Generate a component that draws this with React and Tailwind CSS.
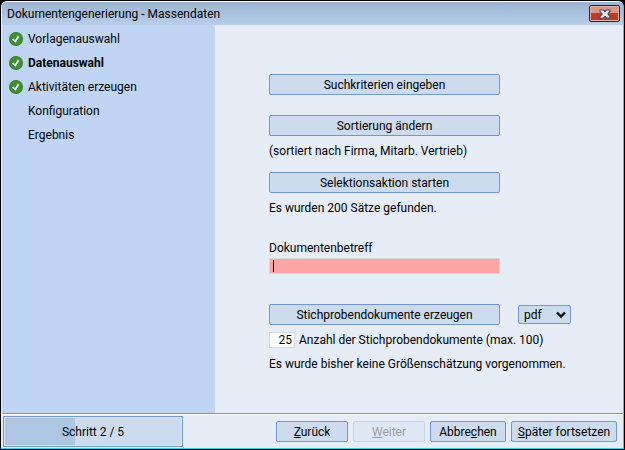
import React, { useState } from 'react';
import clsx from 'clsx';

const steps = [
  { name: 'Vorlagenauswahl', done: true },
  { name: 'Datenauswahl', done: true, current: true },
  { name: 'Aktivitäten erzeugen', done: true },
  { name: 'Konfiguration' },
  { name: 'Ergebnis' },
];

const CheckIcon = () => (
  <svg width="14" height="14" viewBox="0 0 14 14" aria-hidden="true">
    <circle cx="7" cy="7" r="7" fill="#34802a" />
    <circle cx="7" cy="7" r="6" fill="#3f9130" />
    <path d="M3.6 7.2 L6.4 9.4 L9.6 4" fill="none" stroke="#fff" strokeWidth="1.7" />
  </svg>
);

const CloseIcon = () => (
  <svg width="12" height="10" viewBox="0 0 12 10" aria-hidden="true">
    <path d="M1 1 H4.5 L6 2.7 L7.5 1 H11 V2.5 L8.8 5 L11 7.5 V9 H7.5 L6 7.3 L4.5 9 H1 V7.5 L3.2 5 L1 2.5 Z" fill="#f1f2f5" stroke="#4f5565" strokeWidth="1.2" />
  </svg>
);

const ActionButton = ({ className, children, ...props }) => (
  <button
    type="button"
    className={clsx(
      'h-[21px] border border-[#7198d2] rounded-[2px] bg-[#ccdbee] text-center whitespace-nowrap leading-4 disabled:border-[#c3d4ec] disabled:bg-[#dfe8f5] disabled:text-[#9a9ea6]',
      className
    )}
    {...props}
  >
    {children}
  </button>
);

export default function App() {
  const [subject, setSubject] = useState('');
  const [samples, setSamples] = useState('25');
  const [format, setFormat] = useState('pdf');

  return (
    <div className="min-h-screen bg-black p-px font-[Roboto,sans-serif] text-[12px] leading-4 text-black flex">
      <div className="flex-1 flex flex-col rounded-t-md overflow-hidden border border-t-white border-l-[#e6edf7] border-r-[#2fd0ee] border-b-[#2fd0ee] bg-[#e6edf7]">
        {/* Title bar */}
        <header className="flex items-start justify-between h-[23px] pl-[5px] pr-[3px] bg-linear-to-b from-[#9ab3d2] to-[#b8cfea]">
          <h1 className="pt-1">Dokumentengenerierung - Massendaten</h1>
          <button
            type="button"
            aria-label="Schließen"
            className="mt-[3px] w-[31px] h-[17px] flex items-center justify-center rounded-[2px] border border-[#4c1420] bg-linear-to-b from-[#dc9488] from-45% to-[#bd3b26] to-50% shadow-[inset_0_0_0_1px_#e9b3aa]"
          >
            <CloseIcon />
          </button>
        </header>

        <div className="flex-1 flex">
          {/* Steps */}
          <nav className="w-[213px] shrink-0 bg-[#bfd5f3] pl-[7px] pt-[6px]">
            <ol className="flex flex-col gap-2">
              {steps.map((step) => (
                <li key={step.name} className={clsx('flex items-center gap-[5px]', step.current && 'font-bold')}>
                  <span className="w-[14px]">{step.done && <CheckIcon />}</span>
                  {step.name}
                </li>
              ))}
            </ol>
          </nav>

          {/* Form */}
          <main className="flex-1 flex flex-col items-start pl-[54px] pt-[49px] whitespace-nowrap">
            <ActionButton className="w-[231px]">Suchkriterien eingeben</ActionButton>
            <ActionButton className="w-[231px] mt-5">Sortierung ändern</ActionButton>
            <p className="mt-[7px]">(sortiert nach Firma, Mitarb. Vertrieb)</p>
            <ActionButton className="w-[231px] mt-[13px]">Selektionsaktion starten</ActionButton>
            <p className="mt-[7px]">Es wurden 200 Sätze gefunden.</p>

            <label htmlFor="subject" className="mt-6">Dokumentenbetreff</label>
            <div className="relative mt-[2px]">
              <input
                id="subject"
                type="text"
                value={subject}
                onChange={(e) => setSubject(e.target.value)}
                className="block w-[231px] h-4 px-1 border border-[#d8d8d8] bg-[#ffa5a5] outline-none"
              />
              {/* Text cursor of the empty field */}
              {!subject && <span className="absolute left-1 top-[2px] w-px h-3 bg-black pointer-events-none" />}
            </div>

            <div className="mt-[30px] flex items-center gap-[18px]">
              <ActionButton className="w-[231px]">Stichprobendokumente erzeugen</ActionButton>
              <div className="relative">
                <select
                  aria-label="Format"
                  value={format}
                  onChange={(e) => setFormat(e.target.value)}
                  className="block appearance-none w-[53px] h-[19px] pl-[5px] leading-4 border border-[#7198d2] rounded-[2px] bg-[#ccdbee]"
                >
                  <option value="pdf">pdf</option>
                  <option value="docx">docx</option>
                </select>
                <svg className="absolute right-[5px] top-[6px] pointer-events-none" width="10" height="8" viewBox="0 0 10 8" aria-hidden="true">
                  <path d="M1 1.5 L5 5.5 L9 1.5" fill="none" stroke="#111" strokeWidth="2.4" />
                </svg>
              </div>
            </div>

            <div className="mt-[7px] flex items-center gap-1">
              <input
                id="samples"
                type="text"
                value={samples}
                onChange={(e) => setSamples(e.target.value)}
                className="w-[26px] h-4 px-[2px] text-right border border-[#d8d8d8] bg-white outline-none"
              />
              <label htmlFor="samples">Anzahl der Stichprobendokumente (max. 100)</label>
            </div>
            <p className="mt-2">Es wurde bisher keine Größenschätzung vorgenommen.</p>
          </main>
        </div>

        {/* Footer */}
        <footer className="flex items-center justify-between border-t border-[#7198d2] shadow-[inset_0_1px_0_#fff] pt-[2px] pb-px pl-px pr-[6px]">
          <div className="w-[180px] h-[31px] border border-[#7198d2] bg-[#dbe6f5] p-px">
            <div className="h-full flex items-center justify-center bg-linear-to-r from-[#afc5e4] from-40% to-[#ccdbee] to-40%">
              Schritt 2 / 5
            </div>
          </div>
          <div className="flex gap-[5px]">
            <ActionButton className="w-[72px]"><u>Z</u>urück</ActionButton>
            <ActionButton className="w-[72px]" disabled><u>W</u>eiter</ActionButton>
            <ActionButton className="w-[76px]">Abbre<u>c</u>hen</ActionButton>
            <ActionButton className="w-[106px]"><u>S</u>päter fortsetzen</ActionButton>
          </div>
        </footer>
      </div>
    </div>
  );
}
